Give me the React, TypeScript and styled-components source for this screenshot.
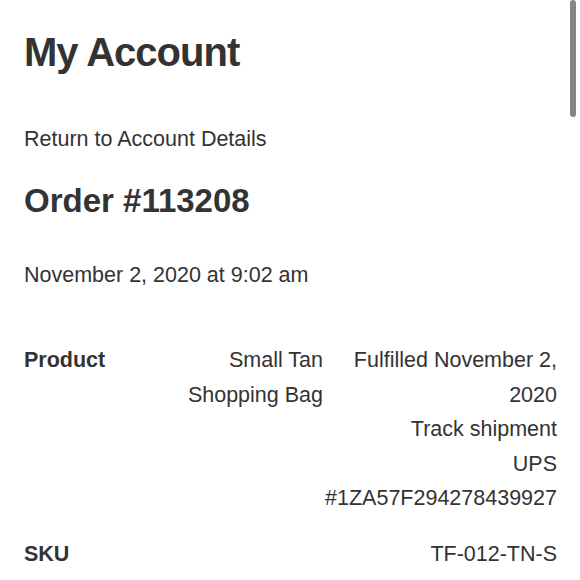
import React from "react";
import styled, { createGlobalStyle } from "styled-components";

const GlobalStyle = createGlobalStyle`
  html, body {
    margin: 0;
    padding: 0;
    background: #fff;
  }
  body {
    font-family: "Liberation Sans", Arial, Helvetica, sans-serif;
    color: #333;
    overflow: hidden;
  }
`;

const productLines = ["Small Tan", "Shopping Bag"];
const fulfilmentLines = [
  "Fulfilled November 2,",
  "2020",
  "Track shipment",
  "UPS",
  "#1ZA57F294278439927",
];

export default function App() {
  return (
    <>
      <GlobalStyle />
      <Page>
        <Title>My Account</Title>
        <BackLink href="#">Return to Account Details</BackLink>
        <OrderTitle>Order #113208</OrderTitle>
        <OrderDate>November 2, 2020 at 9:02 am</OrderDate>

        <Details>
          <Label>Product</Label>
          <Value>
            {productLines.map((l) => (
              <div key={l}>{l}</div>
            ))}
          </Value>
          <Value>
            {fulfilmentLines.map((l) => (
              <div key={l}>{l}</div>
            ))}
          </Value>

          <Label>SKU</Label>
          <Value span={2}>TF-012-TN-S</Value>
        </Details>
      </Page>
      <ScrollThumb />
    </>
  );
}

const Page = styled.main`
  padding: 28px 23px 0 24px;
`;

const Title = styled.h1`
  margin: 0;
  font-size: 40px;
  line-height: 48px;
  font-weight: 700;
  letter-spacing: -1px;
`;

const BackLink = styled.a`
  display: block;
  margin-top: 48px;
  font-size: 21.5px;
  line-height: 30px;
  color: #333;
  text-decoration: none;
`;

const OrderTitle = styled.h2`
  margin: 27px 0 0;
  font-size: 33px;
  line-height: 40px;
  font-weight: 700;
`;

const OrderDate = styled.p`
  margin: 39px 0 0;
  font-size: 21.5px;
  line-height: 30px;
`;

const Details = styled.div`
  margin-top: 53px;
  display: grid;
  grid-template-columns: 1fr 150px 234px;
  row-gap: 21px;
  font-size: 21.5px;
  line-height: 34.5px;
`;

const Label = styled.div`
  font-weight: 700;
`;

const Value = styled.div<{ span?: number }>`
  text-align: right;
  grid-column: span ${(p) => p.span ?? 1};
`;

const ScrollThumb = styled.div`
  position: fixed;
  top: 0;
  right: 4px;
  width: 6px;
  height: 117px;
  border-radius: 3px;
  background: #868686;
`;
